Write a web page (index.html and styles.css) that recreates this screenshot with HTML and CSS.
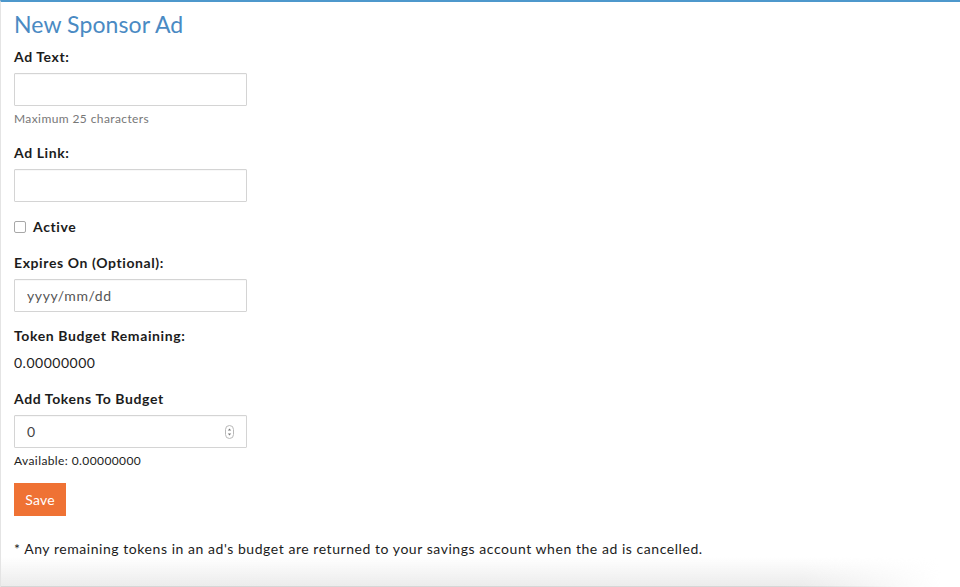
FILE: index.html
```html
<!DOCTYPE html>
<html>
<head>
<meta charset="utf-8">
<link rel="stylesheet" href="styles.css">
</head>
<body>
<div class="page">
  <h1 class="title">New Sponsor Ad</h1>
  <form class="form">
    <div class="group g-text">
      <label class="label">Ad Text:</label>
      <input class="input" type="text">
      <div class="help">Maximum 25 characters</div>
    </div>
    <div class="group g-link">
      <label class="label">Ad Link:</label>
      <input class="input" type="text">
    </div>
    <div class="group g-check">
      <label class="check-label"><span class="checkbox"></span>Active</label>
    </div>
    <div class="group g-date">
      <label class="label">Expires On (Optional):</label>
      <input class="input date" type="text" placeholder="yyyy/mm/dd">
    </div>
    <div class="group g-remaining">
      <label class="label">Token Budget Remaining:</label>
      <div class="value">0.00000000</div>
    </div>
    <div class="group g-add">
      <label class="label">Add Tokens To Budget</label>
      <div class="num-wrap">
        <input class="input num" type="text" value="0">
        <svg class="spinner" width="9" height="14" viewBox="0 0 9 14">
          <rect x="0.5" y="0.5" width="8" height="13" rx="4" fill="#fff" stroke="#b8b8b8"/>
          <path d="M2.8 5.6 L4.5 3.6 L6.2 5.6 Z" fill="#777"/>
          <path d="M2.8 8.4 L4.5 10.4 L6.2 8.4 Z" fill="#777"/>
        </svg>
      </div>
      <div class="avail">Available: 0.00000000</div>
    </div>
    <button class="btn" type="button">Save</button>
  </form>
  <p class="note">* Any remaining tokens in an ad's budget are returned to your savings account when the ad is cancelled.</p>
</div>
</body>
</html>
```
FILE: styles.css
```css
html, body {
  margin: 0;
  padding: 0;
  height: 587px;
  overflow: hidden;
  background: #fff;
}
body {
  font-family: Lato, "Liberation Sans", sans-serif;
  color: #222;
}
.page {
  box-sizing: border-box;
  height: 587px;
  border-top: 2px solid #4d98cc;
  border-left: 1px solid #e4e4e4;
  padding: 0 13px;
  position: relative;
}
.page::before {
  content: "";
  position: absolute;
  left: 0;
  right: 0;
  bottom: 0;
  height: 30px;
  background: linear-gradient(to bottom, rgba(236,236,236,0), #ebebeb);
  -webkit-mask-image: linear-gradient(to right, #000 0, #000 800px, transparent 940px);
  mask-image: linear-gradient(to right, #000 0, #000 800px, transparent 940px);
}
.page::after {
  content: "";
  position: absolute;
  left: 0;
  bottom: 0;
  width: 895px;
  height: 1px;
  background: linear-gradient(to right, #d6d6d6 0, #d6d6d6 780px, rgba(214,214,214,0));
}
.title {
  margin: 0;
  padding-top: 9px;
  font-size: 23px;
  line-height: 26px;
  font-weight: 400;
  letter-spacing: 0.1px;
  color: #4a8ac3;
}
.form {
  display: flex;
  flex-direction: column;
  align-items: flex-start;
  margin-top: 10px;
}
.group {
  display: flex;
  flex-direction: column;
  align-items: flex-start;
}
.label {
  font-size: 14px;
  line-height: 20px;
  font-weight: 700;
  letter-spacing: 0.6px;
  color: #1c1c1c;
  margin-bottom: 6px;
}
.input {
  box-sizing: border-box;
  width: 233px;
  height: 33px;
  border: 1px solid #d4d4d4;
  border-radius: 1px;
  background: #fff;
  padding: 0 12px;
  font-family: inherit;
  font-size: 14px;
  color: #444;
  outline: none;
  box-shadow: inset 0 1px 1px rgba(0,0,0,0.03);
}
.input::placeholder {
  color: #555;
  letter-spacing: 0.6px;
}
.help {
  margin-top: 4px;
  font-size: 12px;
  line-height: 17px;
  letter-spacing: 0.4px;
  color: #777;
}
.g-text { margin-bottom: 16px; }
.g-link { margin-bottom: 15px; }
.g-check { margin-bottom: 16px; }
.check-label {
  display: flex;
  align-items: center;
  font-size: 14px;
  line-height: 20px;
  font-weight: 700;
  letter-spacing: 0.6px;
  color: #1c1c1c;
}
.checkbox {
  box-sizing: border-box;
  width: 12px;
  height: 12px;
  border: 1px solid #a8a8a8;
  border-radius: 2px;
  background: #fff;
  margin-right: 7px;
}
.g-date { margin-bottom: 14px; }
.value {
  margin-top: 7px;
  font-size: 14px;
  line-height: 20px;
  letter-spacing: 0.5px;
  color: #1c1c1c;
}
.g-remaining { margin-bottom: 16px; }
.g-remaining .label { margin-bottom: 0; }
.num-wrap {
  position: relative;
}
.spinner {
  position: absolute;
  right: 13px;
  top: 10px;
}
.avail {
  margin-top: 4px;
  font-size: 12px;
  line-height: 17px;
  letter-spacing: 0.4px;
  color: #1c1c1c;
}
.g-add { margin-bottom: 14px; }
.btn {
  width: 52px;
  height: 33px;
  border: none;
  border-radius: 0;
  background: #ef7234;
  color: #fff;
  font-family: inherit;
  font-size: 14px;
  letter-spacing: 0.2px;
  padding: 0;
  cursor: pointer;
}
.note {
  margin: 23px 0 0;
  font-size: 14px;
  line-height: 20px;
  letter-spacing: 0.55px;
  color: #1c1c1c;
  position: relative;
  z-index: 1;
}
```
